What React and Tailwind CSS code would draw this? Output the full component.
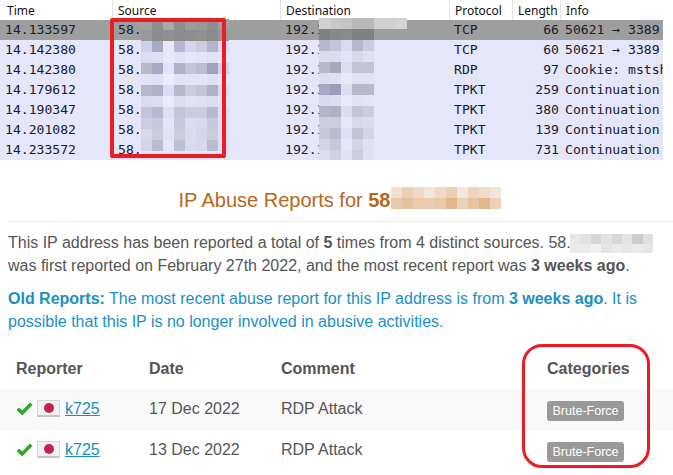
const SRC = [
  ["a0a0a0","8e8e8e","a8a8a8","8e8e8e","9c9c9c","989898","8e8e8e","a0a0a0"],
  ["989898","8c8c8c","909090","8c8c8c","8e8e8e","909090","8a8a8a","989898"],
  ["d0d0ea","a8a8c8","e8e8fa","b8b8d4","d4d4ec","ccccdf","b4b4d0","dcdcf2"],
  ["dcdcf0","e0e0f5","e8e8f8","e2e2f6","e6e6fa","e4e4f8","e0e0f4","e6e6fa"],
  ["b8b8cc","a8a8c4","dfe4f8","b0b0c8","c4c4dc","bcbcd0","a0a0c0","d4d4e8"],
  ["e2e2f6","e0e0f4","ecedfc","e2e2f6","e4e4f8","e4e4f8","e0e0f4","e6e6fa"],
  ["b8b8cc","b0b0c8","d8dcf4","b8b8cc","ccccdf","c4c4d8","b0b0c8","dcdcf0"],
  ["dadaf0","dcdcf2","eaeafc","dcdcf0","e2e2f6","e0e0f4","dcdcf0","e4e4f8"],
  ["c4c4dc","b8b8d0","dcdff6","c4c4dc","ccccdf","ccccdf","b8b8d0","dedef4"],
  ["ccccdf","c8c8dc","e6e6fa","c8c8dc","dcdcf2","d8d8ee","c8c8dc","e0e0f4"],
  ["d8d8ec","ccccdf","e2e2f8","ccccdf","dadaf0","d4d4ea","ccccdf","e0e0f4"],
  ["d4d4e8","bcbcd0","e6e6fa","c0c0d4","dadaf0","d8d8ec","bcbcd0","e0e0f4"],
];
const DST = [
  ["d0d0d0","c8c8c8","c4c4c4","b8b8b8","b8b8b8","d0d0d0","d0d0d0","d4d4d4"],
  ["808080","888888","8a8a8a","808080","808080","9e9e9e","9e9e9e","9e9e9e"],
  ["b8b8cc","c4c4dc","dadaf0","b8b8cc","ccccdf"],
  ["dcdcf0","dcdcf0","e4e4f8","d8d8ec","e0e0f4"],
  ["b8b8cc","a8a8bc","dcdcf2","c4c4d8","c4c4d8"],
  ["dcdcf2","e0e0f4","e8e8fa","e2e2f6","e2e2f6"],
  ["a8a8c4","9c9cbc","dcdcf2","b8b8cc","b8b8cc"],
  ["d8d8ee","dcdcf2","e8e8fa","e2e2f6","e4e4f8"],
  ["b4b4c8","b0b0c0","dcdcf2","c4c4d8","ccccdf"],
  ["ccccdf","ccccdf","e6e6fa","d8d8ec","dcdcf0"],
  ["c8c8dc","bcbcd0","dedef4","c4c4d8","d4d4e8"],
  ["d4d4e8","c8c8dc","e6e6fa","d4d4e8","e0e0f4"],
  ["dcdcf0","d0d0e4","e2e2f6","ccccdf","e0e0f4"],
];
const TITLE = [
  ["f0e0d0","eccfb4","efd9c4","f2e6da","f0d8c4","ecd0b4","f4e8da","eed4bc","f0dcc8","f2e4d6"],
  ["e8c8a8","e4c09c","eacaac","eccdb2","eac8aa","e0b88e","ecd2b8","e6c4a2","e0b88e","eed2b8"],
];
const GREY = [
  ["e8e8e8","e2e2e2","d6d6d6","e2e2e2","d8d8d8","e4e4e4","cccccc","e0e0e0"],
  ["eaeaea","eaeaea","f2f2f2","e4e4e4","eaeaea","e6e6e6","eaeaea","e6e6e6"],
];

function Mosaic({ cells, size = 11, className = "" }) {
  const w = Math.max(...cells.map((r) => r.length)) * size;
  return (
    <svg width={w} height={cells.length * size} className={className} shapeRendering="crispEdges" aria-hidden="true">
      {cells.map((r, y) =>
        r.map((c, x) => <rect key={x} x={x * size} y={y * size} width={size} height={size} fill={"#" + c} />)
      )}
    </svg>
  );
}

const packets = [
  ["14.133597", "TCP", "66", "50621 → 3389"],
  ["14.142380", "TCP", "60", "50621 → 3389"],
  ["14.142380", "RDP", "97", "Cookie: mstsh"],
  ["14.179612", "TPKT", "259", "Continuation"],
  ["14.190347", "TPKT", "380", "Continuation"],
  ["14.201082", "TPKT", "139", "Continuation"],
  ["14.233572", "TPKT", "731", "Continuation"],
];

function HeadCell({ w, children, pad = "pl-[5px]" }) {
  return <div className={`${w} ${pad} h-full shrink-0 border-r border-[#e3e3e3] flex items-center`}>{children}</div>;
}

function Capture() {
  return (
    <div className="relative h-[160px] overflow-hidden">
      <div className="flex h-5 text-[12px] text-[#111] font-['Noto_Sans',sans-serif]">
        <HeadCell w="w-[113px]" pad="pl-[7px]">Time</HeadCell>
        <HeadCell w="w-[168px]">Source</HeadCell>
        <HeadCell w="w-[169px]">Destination</HeadCell>
        <HeadCell w="w-[63px]" pad="pl-[5px]">Protocol</HeadCell>
        <HeadCell w="w-[48px]">Length</HeadCell>
        <div className="pl-[5px] h-full flex items-center">Info</div>
      </div>
      <div className="w-[663px] font-['DejaVu_Sans_Mono',monospace] text-[13.1px] text-[#16202c]">
        {packets.map((p, i) => (
          <div key={i} className={`flex h-5 pb-[2px] items-center whitespace-nowrap overflow-hidden ${i === 0 ? "bg-[#9e9e9e]" : "bg-[#e6e6fa]"}`}>
            <div className="w-[113px] shrink-0 pl-[5px]">{p[0]}</div>
            <div className="w-[168px] shrink-0 pl-[5px]">58.</div>
            <div className="w-[169px] shrink-0 pl-[4px]">192.1</div>
            <div className="w-[63px] shrink-0 pl-[4px]">{p[1]}</div>
            <div className="w-[46px] shrink-0 text-right">{p[2]}</div>
            <div className="shrink-0 pl-[6px]">{p[3]}</div>
          </div>
        ))}
      </div>
      <Mosaic cells={SRC} className="absolute left-[141px] top-[19px]" />
      <Mosaic cells={DST} className="absolute left-[319px] top-[18px]" />
      <div className="absolute left-[110px] top-[18px] w-[116px] h-[140px] border-[4px] border-[#ed1c24] rounded-[2px]" />
    </div>
  );
}

function Check() {
  return (
    <svg width="17" height="14" viewBox="0 0 17 14" className="shrink-0">
      <path d="M0.5 8 L3 5.5 L6.2 8.6 L14 0.5 L16.5 3 L6.2 13.5 Z" fill="#2fa82b" />
    </svg>
  );
}

function Flag() {
  return (
    <span className="w-[23px] h-[17px] shrink-0 flex items-center justify-center bg-[#f1f1f1] border border-[#d6d6d6] border-b-[2px] border-b-[#c4c4c4] rounded-[1px]">
      <span className="w-[10px] h-[10px] rounded-full bg-[#c4224c]" />
    </span>
  );
}

function ReportRow({ date, striped }) {
  return (
    <div className={`flex items-center pl-2 text-[#555] ${striped ? "h-[42px] pb-[3px] bg-[#f9f9f9]" : "h-[41px] pb-[4px]"}`}>
      <div className="w-[141px] pl-2 flex items-center gap-1">
        <Check />
        <Flag />
        <a href="#" className="ml-[1px] text-[#1a8fc4] underline">k725</a>
      </div>
      <div className="w-[132px]">{date}</div>
      <div className="w-[266px]">RDP Attack</div>
      <span className="w-[77px] h-5 flex items-center justify-center rounded-[3px] bg-[#999] text-white text-[12.5px] mt-[5px]">Brute-Force</span>
    </div>
  );
}

export default function App() {
  return (
    <div className="relative w-[673px] h-[475px] overflow-hidden bg-white font-['Liberation_Sans',Arial,sans-serif] text-[16px] leading-[23px] text-[#555]">
      <Capture />
      <div className="pl-2">
        <h2 className="h-[62px] border-b border-[#eee] pr-[2px] pt-[28px] text-center text-[20px] leading-[24px] text-[#b8661a] flex justify-center">
          <span>IP Abuse Reports for <b>58</b></span>
          <Mosaic cells={TITLE} className="mt-[-1px]" />
        </h2>
        <p className="mt-[9px]">
          This IP address has been reported a total of <b>5</b> times from 4 distinct sources. 58.
          <Mosaic cells={GREY} size={10.4} className="inline-block align-[-5px] h-[19px] -ml-[1px]" />
          <br />
          was first reported on February 27th 2022, and the most recent report was <b>3 weeks ago</b>.
        </p>
        <p className="mt-[10px] text-[#1a8fc4]">
          <b>Old Reports:</b> The most recent abuse report for this IP address is from <b>3 weeks ago</b>. It is
          <br />
          possible that this IP is no longer involved in abusive activities.
        </p>
      </div>
      <div className="mt-[10px]">
        <div className="flex items-center h-[46px] pt-[4px] pl-2 font-bold text-[#555]">
          <div className="w-[141px] pl-2">Reporter</div>
          <div className="w-[132px]">Date</div>
          <div className="w-[266px]">Comment</div>
          <div>Categories</div>
        </div>
        <ReportRow date="17 Dec 2022" striped />
        <ReportRow date="13 Dec 2022" />
      </div>
      <div className="absolute left-[522px] top-[344px] w-[128px] h-[124px] border-[3px] border-[#ed1c24] rounded-[20px]" />
    </div>
  );
}
